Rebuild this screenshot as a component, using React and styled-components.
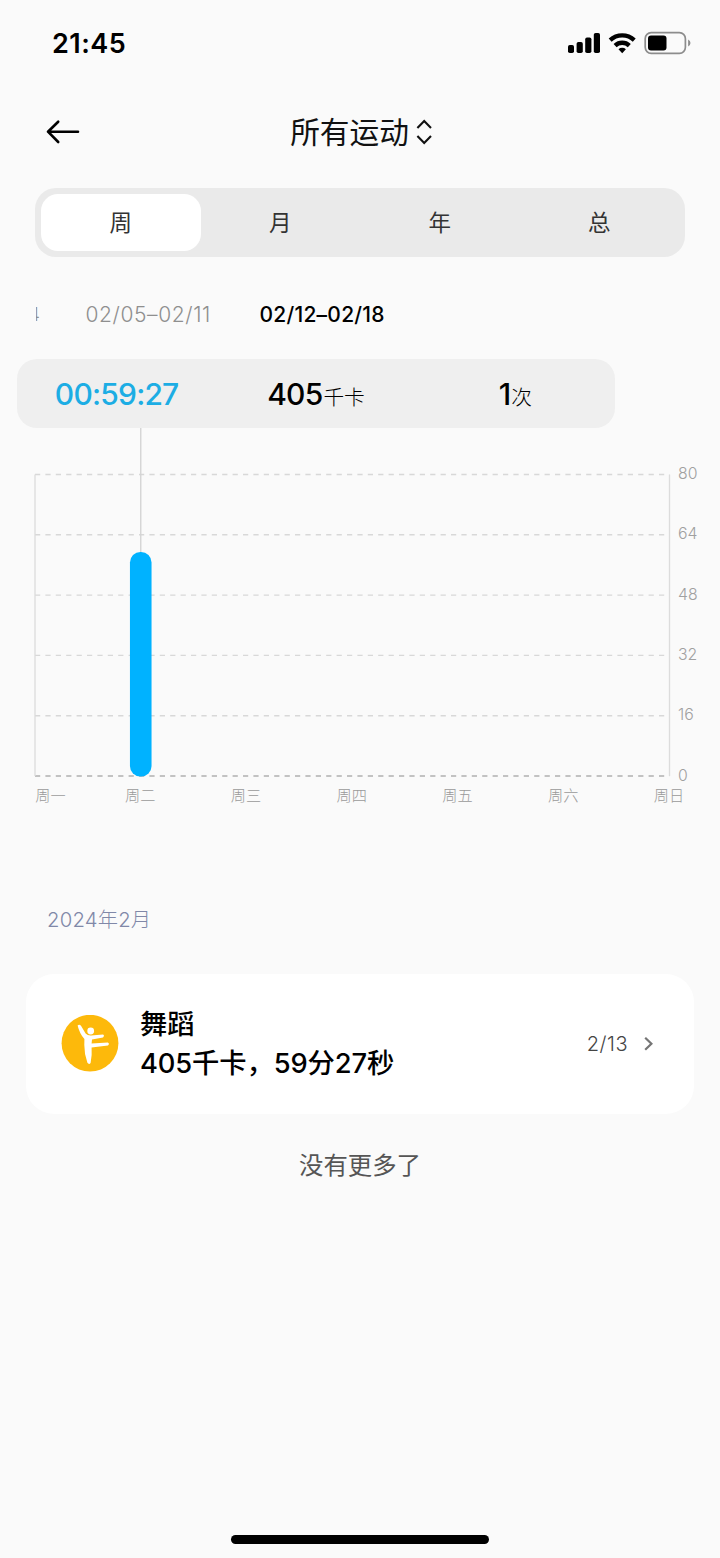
import React from 'react';
import styled, { createGlobalStyle } from 'styled-components';

const periods = ['周', '月', '年', '总'];
const days = ['周一', '周二', '周三', '周四', '周五', '周六', '周日'];
const ticks = [80, 64, 48, 32, 16, 0];
const minutes = [0, 59.45, 0, 0, 0, 0, 0];

const plot = { left: 35, right: 669.5, top: 46.5, bottom: 348 };
const dayStep = (plot.right - plot.left) / 6;
const yFor = (value) => plot.bottom - (value / 80) * (plot.bottom - plot.top);

export default function App() {
    return (
        <Screen>
            <GlobalStyle />
            <StatusBar>
                <Clock>21:45</Clock>
                <StatusIcons />
            </StatusBar>
            <Header>
                <BackArrow />
                <Title>
                    所有运动
                    <SortArrows />
                </Title>
            </Header>
            <Segments>
                {periods.map((period, i) => (
                    <Segment key={period} $active={i === 0}>{period}</Segment>
                ))}
            </Segments>
            <Weeks>
                <ClippedWeek>4</ClippedWeek>
                <Week>02/05–02/11</Week>
                <Week $active>02/12–02/18</Week>
            </Weeks>
            <Summary>
                <Stat $blue>00:59:27</Stat>
                <Stat>405<Unit>千卡</Unit></Stat>
                <Stat>1<Unit>次</Unit></Stat>
            </Summary>
            <WeekChart />
            <Month>2024年2月</Month>
            <Card>
                <DanceIcon />
                <CardText>
                    <Sport>舞蹈</Sport>
                    <Detail>405千卡，59分27秒</Detail>
                </CardText>
                <CardDate>2/13</CardDate>
                <Chevron />
            </Card>
            <NoMore>没有更多了</NoMore>
            <HomeBar />
        </Screen>
    )
}

function StatusIcons() {
    return (
        <svg width="124" height="24" viewBox="0 0 124 24">
            <rect x="1" y="14" width="6" height="8" rx="1.8" />
            <rect x="9.6" y="11" width="6.2" height="11" rx="1.8" />
            <rect x="18.2" y="6.5" width="6.2" height="15.5" rx="1.8" />
            <rect x="26.8" y="2" width="6.2" height="20" rx="1.8" />
            <path d="M41.7 7.6 A19.5 19.5 0 0 1 68.7 7.6 L65.8 10.8 A15 15 0 0 0 44.6 10.8 Z" />
            <path d="M46.6 12.9 A12.4 12.4 0 0 1 63.8 12.9 L60.8 16.2 A8 8 0 0 0 49.6 16.2 Z" />
            <path d="M51.5 18.3 A5.4 5.4 0 0 1 58.9 18.3 L55.2 22.2 Z" />
            <rect x="78.2" y="1.7" width="40.2" height="20.6" rx="6" fill="none" stroke="#8c8c8c" strokeWidth="1.7" />
            <rect x="81" y="4.5" width="18.5" height="15" rx="3" />
            <path d="M121.1 8.5 q2.4 1.2 2.4 3.5 t-2.4 3.5z" fill="#8c8c8c" />
        </svg>
    )
}

function BackArrow() {
    return (
        <svg width="36" height="26" viewBox="0 0 36 26" fill="none" stroke="#000" strokeWidth="2.6" strokeLinecap="round" strokeLinejoin="round">
            <path d="M33 12.7H3M13.2 2.7 3 12.7l10.2 10.3" />
        </svg>
    )
}

function SortArrows() {
    return (
        <svg width="16" height="26" viewBox="0 0 16 26" fill="none" stroke="#111" strokeWidth="2.1">
            <path d="M1.4 9 8.2 2l6.8 7M1.4 17 8.2 24l6.8-7" />
        </svg>
    )
}

function Chevron() {
    return (
        <svg width="10" height="16" viewBox="0 0 10 16" fill="none" stroke="#757575" strokeWidth="2.2">
            <path d="M1.2 1.8 7.4 7.8l-6.2 6" />
        </svg>
    )
}

function DanceIcon() {
    return (
        <svg width="58" height="58" viewBox="0 0 58 58">
            <circle cx="29" cy="28.2" r="28.4" fill="#fdb90b" />
            <circle cx="29.7" cy="16" r="3.4" fill="#fff" />
            <path
                d="M16.6 10.4 Q18.4 8.8 20 10.8 L24.6 18.6 Q26.6 20.8 30 20.6 L42 19.6 Q43.9 20.8 42 22.4 L31 24.4 L30.6 28.4 L46.8 27.6 Q49 28.9 47 30.4 L30.6 32.4 Q31.2 40.4 29.6 48 Q28 50 26.4 47.8 Q23.2 38.6 23.3 30 L23.4 24 Q18.6 18.6 16.6 10.4 Z"
                fill="#fff"
            />
        </svg>
    )
}

function WeekChart() {
    return (
        <Chart width="720" height="384" viewBox="0 0 720 384">
            {ticks.map((tick) => (
                <g key={tick}>
                    <GridLine x1={plot.left} x2={plot.right} y1={yFor(tick)} y2={yFor(tick)} $base={tick === 0} />
                    <TickLabel x="678" y={yFor(tick) + 4.5}>{tick}</TickLabel>
                </g>
            ))}
            <SideLine x1={plot.left} x2={plot.left} y1={plot.top} y2={plot.bottom} />
            <SideLine x1={plot.right} x2={plot.right} y1={plot.top} y2={plot.bottom} />
            {minutes.map((value, i) => {
                if (!value) return null;
                const x = plot.left + i * dayStep;
                return (
                    <g key={days[i]}>
                        <Pointer x1={x} x2={x} y1="0" y2={yFor(value)} />
                        <rect x={x - 10.8} y={yFor(value)} width="21.6" height={plot.bottom - yFor(value) + 0.5} rx="10.5" fill="#00b2ff" />
                    </g>
                )
            })}
            {days.map((day, i) => (
                <DayLabel key={day} x={i === 0 ? 50.5 : plot.left + i * dayStep - 0.5} y="372.5">{day}</DayLabel>
            ))}
        </Chart>
    )
}

const GlobalStyle = createGlobalStyle`
    body {
        margin: 0;
        background: #fafafa;
    }
`

const Screen = styled.div`
    display: flex;
    flex-direction: column;
    width: 720px;
    height: 1558px;
    overflow: hidden;
    background: #fafafa;
    color: #000;
    font-family: Inter, 'Noto Sans CJK SC', sans-serif;
`

const StatusBar = styled.div`
    display: flex;
    align-items: center;
    justify-content: space-between;
    height: 86px;
    padding: 0 29px 0 52px;
`

const Clock = styled.div`
    font-size: 27px;
    font-weight: 600;
    letter-spacing: 0.5px;
`

const Header = styled.div`
    display: grid;
    grid-template-columns: 100px 1fr 100px;
    align-items: center;
    height: 92px;
    padding: 0 45px;
    margin-bottom: 10px;
`

const Title = styled.div`
    display: flex;
    align-items: center;
    justify-content: center;
    gap: 7px;
    padding-left: 2px;
    font-size: 29.7px;
    line-height: 44px;
    color: #111;
`

const Segments = styled.div`
    display: flex;
    height: 57px;
    margin: 0 35px;
    padding: 6px;
    border-radius: 21px;
    background: #eaeaea;
`

const Segment = styled.div`
    display: flex;
    flex: 1;
    align-items: center;
    justify-content: center;
    box-sizing: border-box;
    padding-bottom: 3px;
    border-radius: 17px;
    background: ${({ $active }) => ($active ? '#fff' : 'transparent')};
    font-size: 22.5px;
    color: #333;
`

const Weeks = styled.div`
    display: flex;
    align-items: center;
    height: 30px;
    margin: 42px 35px 30px;
    gap: 48.5px;
`

const Week = styled.div`
    font-size: 21px;
    letter-spacing: ${({ $active }) => ($active ? '0.25px' : '0.6px')};
    font-weight: ${({ $active }) => ($active ? 500 : 300)};
    color: ${({ $active }) => ($active ? '#000' : '#8f8f8f')};
`

/* only the tail of the previous week is scrolled into view */
const ClippedWeek = styled(Week)`
    display: flex;
    justify-content: flex-end;
    width: 4px;
    margin: 0 -3px 0 1px;
    overflow: hidden;
    font-size: 19px;
    letter-spacing: 0;
`

const Summary = styled.div`
    display: grid;
    grid-template-columns: repeat(3, 1fr);
    align-items: center;
    width: 598px;
    height: 69px;
    margin-left: 17px;
    border-radius: 20px;
    background: #efefef;
`

const Stat = styled.div`
    text-align: center;
    font-size: 30px;
    font-weight: 500;
    letter-spacing: -0.8px;
    color: ${({ $blue }) => ($blue ? '#1cade4' : '#000')};
`

const Unit = styled.span`
    margin-left: 1px;
    font-size: 20.7px;
    font-weight: 300;
    letter-spacing: 0;
`

const Chart = styled.svg`
    display: block;
    flex: none;
`

const GridLine = styled.line`
    stroke: ${({ $base }) => ($base ? '#b0b0b0' : '#d8d8d8')};
    stroke-width: 1.4;
    stroke-dasharray: 5.2 5.2;
`

const SideLine = styled.line`
    stroke: #dcdcdc;
    stroke-width: 1.3;
`

const Pointer = styled.line`
    stroke: #d4d4d4;
    stroke-width: 1.4;
`

const TickLabel = styled.text`
    font-size: 15.8px;
    font-weight: 300;
    fill: #a0a0a0;
`

const DayLabel = styled.text`
    font-size: 15.2px;
    font-weight: 300;
    text-anchor: middle;
    fill: #999;
`

const Month = styled.div`
    margin: 92px 0 0 47px;
    font-size: 20.3px;
    font-weight: 300;
    line-height: 31px;
    letter-spacing: 0.2px;
    color: #8088a8;
`

const Card = styled.div`
    display: flex;
    align-items: center;
    height: 140px;
    margin: 39px 26px 0;
    padding: 0 40px 0 35px;
    box-sizing: border-box;
    border-radius: 28px;
    background: #fff;
`

const CardText = styled.div`
    flex: 1;
    margin-left: 21px;
    font-weight: 500;
    line-height: 39px;
`

const Sport = styled.div`
    font-size: 27.3px;
`

const Detail = styled.div`
    font-size: 27.3px;
    letter-spacing: -0.1px;
`

const CardDate = styled.div`
    margin-right: 16px;
    font-size: 20px;
    font-weight: 300;
    letter-spacing: 0.5px;
    color: #444;
`

const NoMore = styled.div`
    margin-top: 33px;
    font-size: 24.4px;
    line-height: 36px;
    text-align: center;
    color: #555;
`

const HomeBar = styled.div`
    width: 258px;
    height: 9px;
    margin: auto auto 14px;
    border-radius: 5px;
    background: #000;
`
